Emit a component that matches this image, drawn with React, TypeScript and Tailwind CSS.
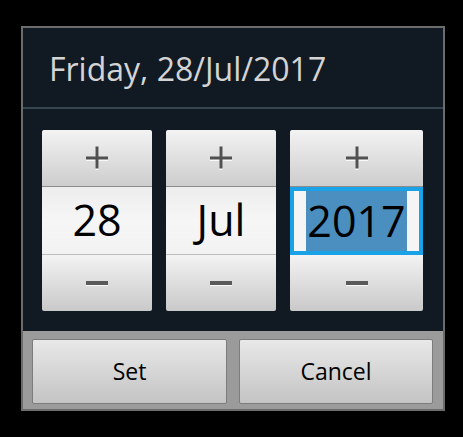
import React from "react";

function PlusIcon() {
  return (
    <svg width="24" height="24" viewBox="0 0 24 24">
      <path d="M1 11h22v3H1z M10.5 1h3v23h-3z" fill="#ffffff" opacity="0.8" transform="translate(0 1)" />
      <path d="M1 10.5h22v3H1z M10.5 0.5h3v22h-3z" fill="#505050" />
    </svg>
  );
}

function MinusIcon() {
  return (
    <svg width="24" height="8" viewBox="0 0 24 8">
      <path d="M1 3h22v4H1z" fill="#ffffff" opacity="0.8" />
      <path d="M1 2h22v4H1z" fill="#5a5a5a" />
    </svg>
  );
}

function Spinner({ value, width, selected }: { value: string; width: string; selected?: boolean }) {
  return (
    <div className={`${width} flex flex-col rounded-[2px] overflow-hidden`}>
      <button className="h-[57px] flex items-center justify-center bg-gradient-to-b from-[#f3f3f3] to-[#cdcdcd] border-b border-[#8c8c8c]">
        <PlusIcon />
      </button>
      {selected ? (
        <div className="h-[68px] border-[4px] border-[#19a3e6] bg-[#f5f5f5] flex items-center justify-center">
          <span className="bg-[#4a8fc0] text-black text-[43px] leading-[60px] px-[1px]">{value}</span>
        </div>
      ) : (
        <div className="h-[68px] bg-gradient-to-b from-[#ededed] via-[#f6f6f6] to-[#f2f2f2] flex items-center justify-center text-black text-[43px] border-b border-[#bdbdbd]">
          {value}
        </div>
      )}
      <button className="h-[56px] flex items-center justify-center bg-gradient-to-b from-[#f3f3f3] to-[#c9c9c9]">
        <MinusIcon />
      </button>
    </div>
  );
}

export default function App() {
  return (
    <div
      className="w-[463px] h-[437px] bg-black pt-[26px] pl-[21px]"
      style={{ fontFamily: '"Open Sans", "Noto Sans", sans-serif' }}
    >
      <div className="w-[424px] border-2 border-[#6c6c6c] bg-[#111a23] flex flex-col">
        <div className="h-[81px] border-b-2 border-[#36444f] flex items-center pl-[26px] pt-[3px] text-[32px] text-[#d4d4d4]">
          Friday, 28/Jul/2017
        </div>
        <div className="flex gap-[14px] pt-[21px] pb-[20px] pl-[19px]">
          <Spinner value="28" width="w-[110px]" />
          <Spinner value="Jul" width="w-[110px]" />
          <Spinner value="2017" width="w-[133px]" selected />
        </div>
        <div className="bg-[#9b9b9b] flex gap-[12px] pt-[8px] pb-[5px] pl-[9px]">
          <button className="w-[195px] h-[65px] rounded-[2px] border border-[#7c7c7c] bg-gradient-to-b from-[#e8e8e8] to-[#c4c4c4] text-[23px] text-black">
            Set
          </button>
          <button className="w-[194px] h-[65px] rounded-[2px] border border-[#7c7c7c] bg-gradient-to-b from-[#e8e8e8] to-[#c4c4c4] text-[23px] text-black">
            Cancel
          </button>
        </div>
      </div>
    </div>
  );
}
